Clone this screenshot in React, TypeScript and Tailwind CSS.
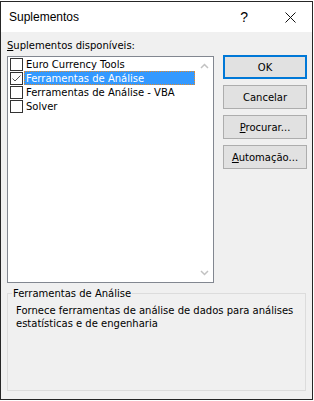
import React from "react";

const items = [
  { label: "Euro Currency Tools", checked: false },
  { label: "Ferramentas de Análise", checked: true, selected: true },
  { label: "Ferramentas de Análise - VBA", checked: false },
  { label: "Solver", checked: false },
];

function CheckBox({ checked }: { checked: boolean }) {
  return (
    <div className="flex h-[13px] w-[13px] shrink-0 items-center justify-center border border-[#333333] bg-white">
      {checked && (
        <svg width="11" height="11" viewBox="0 0 11 11">
          <path d="M1.5 5.5 L4 8 L9.5 2.5" fill="none" stroke="#555" strokeWidth="1" />
        </svg>
      )}
    </div>
  );
}

function Chevron({ up }: { up?: boolean }) {
  return (
    <svg width="9" height="6" viewBox="0 0 9 6">
      <path d={up ? "M1 5 L4.5 1.5 L8 5" : "M1 1 L4.5 4.5 L8 1"} fill="none" stroke="#c2c2c2" strokeWidth="1.5" />
    </svg>
  );
}

function Button({ children, primary }: { children: React.ReactNode; primary?: boolean }) {
  return (
    <div
      className={
        primary
          ? "flex h-[24px] w-[84px] items-center justify-center border-2 border-[#0078d7] bg-[#e1e1e1]"
          : "flex h-[24px] w-[84px] items-center justify-center border border-[#adadad] bg-[#e1e1e1]"
      }
    >
      {children}
    </div>
  );
}

export default function App() {
  return (
    <div className="h-[401px] w-[314px] bg-white pt-[1px] text-[10px] leading-[13px] text-black [font-family:'DejaVu_Sans',Verdana,sans-serif]">
      <div className="flex h-[399px] w-[313px] flex-col border border-[#262626] bg-[#f0f0f0]">
        <div className="flex h-[30px] shrink-0 items-center bg-white pl-[8px] text-[12px] [font-family:'Liberation_Sans',Arial,sans-serif]">
          <span className="flex-1">Suplementos</span>
          <span className="mr-[37px] text-[14px]">?</span>
          <svg className="mr-[16px]" width="11" height="11" viewBox="0 0 11 11">
            <path d="M0.5 0.5 L10.5 10.5 M10.5 0.5 L0.5 10.5" stroke="#111" strokeWidth="1" />
          </svg>
        </div>

        <div className="flex gap-[9px] pl-[6px] pt-[7px]">
          <div className="w-[207px]">
            <div className="h-[13px]"><span className="underline">S</span>uplementos disponíveis:</div>
            <div className="mt-[4px] flex h-[227px] border border-[#828790] bg-white">
              <div className="flex-1 pl-[2px]">
                {items.map((item) => (
                  <div key={item.label} className="flex h-[14px] items-center gap-[1px]">
                    <CheckBox checked={item.checked} />
                    <div
                      className={
                        item.selected
                          ? "flex h-[14px] flex-1 items-center border border-dotted border-[#e08a2c] bg-[#3399ff] pl-[1px] text-white"
                          : "flex h-[14px] flex-1 items-center pl-[2px]"
                      }
                    >
                      {item.label}
                    </div>
                  </div>
                ))}
              </div>
              <div className="ml-[1px] flex w-[17px] flex-col items-center justify-between bg-white py-[6px]">
                <Chevron up />
                <Chevron />
              </div>
            </div>
          </div>

          <div className="mt-[16px] flex flex-col gap-[6px]">
            <Button primary>OK</Button>
            <Button>Cancelar</Button>
            <Button><span><span className="underline">P</span>rocurar...</span></Button>
            <Button><span><span className="underline">A</span>utomação...</span></Button>
          </div>
        </div>

        <div className="relative ml-[6px] mt-[10px] h-[98px] w-[299px] border border-[#dcdcdc] pl-[8px] pt-[10px]">
          <span className="absolute -top-[7px] left-[4px] bg-[#f0f0f0] px-[1px]">Ferramentas de Análise</span>
          <p>Fornece ferramentas de análise de dados para análises estatísticas e de engenharia</p>
        </div>
      </div>
    </div>
  );
}
